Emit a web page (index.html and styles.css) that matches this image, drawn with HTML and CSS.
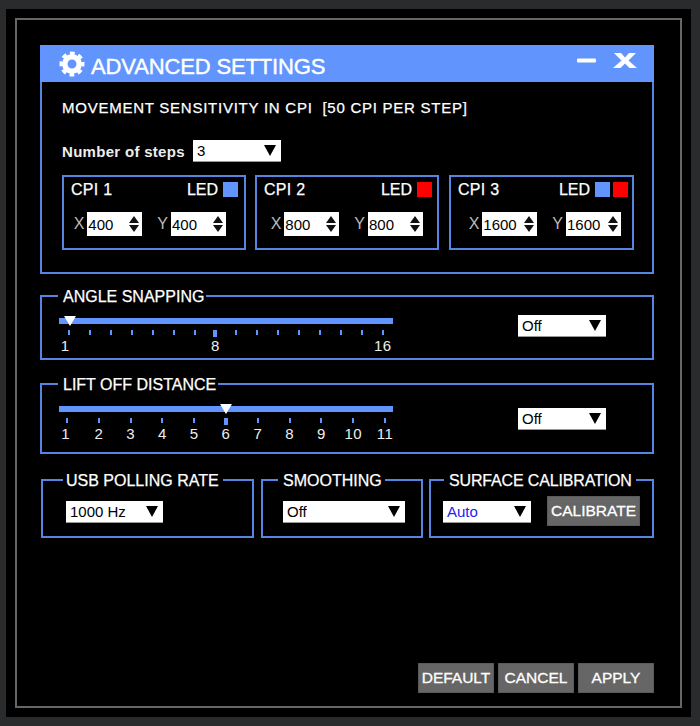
FILE: index.html
```html
<!DOCTYPE html>
<html lang="en">
<head>
<meta charset="utf-8">
<title>Advanced Settings</title>
<link rel="stylesheet" href="styles.css">
</head>
<body>
<div class="frame">
  <div class="inner">
    <header class="titlebar">
      <svg class="gear" viewBox="0 0 26 26" width="26" height="26" aria-hidden="true">
        <circle cx="13" cy="13" r="7.2" fill="none" stroke="#fff" stroke-width="5.4"/>
        <circle cx="13" cy="13" r="10.5" fill="none" stroke="#fff" stroke-width="4" stroke-dasharray="4.6 3.65" stroke-dashoffset="2.3"/>
      </svg>
      <h1 class="title">ADVANCED SETTINGS</h1>
      <svg class="winctl" viewBox="0 0 60 18" width="60" height="18" aria-hidden="true">
        <rect x="0" y="6.5" width="19" height="4" rx="1" fill="#fff"/>
        <path d="M37 1h7l4 4.5L52 1h7l-7.5 7.5L60 16h-7.500l-4.500-4.500L43.500 16H36l8.500-7.500z" fill="#fff"/>
      </svg>
    </header>

    <section class="panel">
      <div class="heading">MOVEMENT SENSITIVITY IN CPI&nbsp; [50 CPI PER STEP]</div>
      <div class="steps">
        <span class="steps-label">Number of steps</span>
        <div class="select w88"><span>3</span><i class="arrow"></i></div>
      </div>
      <div class="cards">
        <div class="card card-1">
          <div class="card-top"><span class="card-name">CPI 1</span><span class="led">LED</span><i class="swatch blue"></i></div>
          <div class="card-inputs">
            <span class="axis">X</span><div class="spin"><span>400</span><i class="updown"></i></div>
            <span class="axis axis-y">Y</span><div class="spin"><span>400</span><i class="updown"></i></div>
          </div>
        </div>
        <div class="card card-2">
          <div class="card-top"><span class="card-name">CPI 2</span><span class="led">LED</span><i class="swatch red"></i></div>
          <div class="card-inputs">
            <span class="axis">X</span><div class="spin"><span>800</span><i class="updown"></i></div>
            <span class="axis axis-y">Y</span><div class="spin"><span>800</span><i class="updown"></i></div>
          </div>
        </div>
        <div class="card card-3">
          <div class="card-top"><span class="card-name">CPI 3</span><span class="led">LED</span><i class="swatch blue"></i><i class="swatch red tight"></i></div>
          <div class="card-inputs">
            <span class="axis">X</span><div class="spin"><span>1600</span><i class="updown"></i></div>
            <span class="axis axis-y">Y</span><div class="spin"><span>1600</span><i class="updown"></i></div>
          </div>
        </div>
      </div>
    </section>

    <fieldset class="group angle">
      <legend>ANGLE SNAPPING</legend>
      <div class="slider slider-angle">
        <div class="track"></div>
        <i class="thumb thumb-angle"></i>
        <div class="stops">
          <div class="stop"><i class="tick"></i><span>1</span></div>
          <div class="stop"><i class="tick"></i></div>
          <div class="stop"><i class="tick"></i></div>
          <div class="stop"><i class="tick"></i></div>
          <div class="stop"><i class="tick"></i></div>
          <div class="stop"><i class="tick"></i></div>
          <div class="stop"><i class="tick"></i></div>
          <div class="stop"><i class="tick major"></i><span>8</span></div>
          <div class="stop"><i class="tick"></i></div>
          <div class="stop"><i class="tick"></i></div>
          <div class="stop"><i class="tick"></i></div>
          <div class="stop"><i class="tick"></i></div>
          <div class="stop"><i class="tick"></i></div>
          <div class="stop"><i class="tick"></i></div>
          <div class="stop"><i class="tick"></i></div>
          <div class="stop"><i class="tick"></i><span>16</span></div>
        </div>
      </div>
      <div class="select w88 side"><span>Off</span><i class="arrow"></i></div>
    </fieldset>

    <fieldset class="group lift">
      <legend>LIFT OFF DISTANCE</legend>
      <div class="slider slider-lift">
        <div class="track"></div>
        <i class="thumb thumb-lift"></i>
        <div class="stops">
          <div class="stop"><i class="tick"></i><span>1</span></div>
          <div class="stop"><i class="tick"></i><span>2</span></div>
          <div class="stop"><i class="tick"></i><span>3</span></div>
          <div class="stop"><i class="tick"></i><span>4</span></div>
          <div class="stop"><i class="tick"></i><span>5</span></div>
          <div class="stop"><i class="tick major"></i><span>6</span></div>
          <div class="stop"><i class="tick"></i><span>7</span></div>
          <div class="stop"><i class="tick"></i><span>8</span></div>
          <div class="stop"><i class="tick"></i><span>9</span></div>
          <div class="stop"><i class="tick"></i><span>10</span></div>
          <div class="stop"><i class="tick"></i><span>11</span></div>
        </div>
      </div>
      <div class="select w88 side"><span>Off</span><i class="arrow"></i></div>
    </fieldset>

    <div class="trio">
      <fieldset class="group mini usb">
        <legend>USB POLLING RATE</legend>
        <div class="select w97"><span>1000 Hz</span><i class="arrow"></i></div>
      </fieldset>
      <fieldset class="group mini smooth">
        <legend>SMOOTHING</legend>
        <div class="select grow"><span>Off</span><i class="arrow"></i></div>
      </fieldset>
      <fieldset class="group mini surface">
        <legend>SURFACE CALIBRATION</legend>
        <div class="select w88 auto"><span>Auto</span><i class="arrow"></i></div>
        <button class="btn calibrate" type="button">CALIBRATE</button>
      </fieldset>
    </div>

    <footer class="actions">
      <button class="btn action" type="button">DEFAULT</button>
      <button class="btn action" type="button">CANCEL</button>
      <button class="btn action" type="button">APPLY</button>
    </footer>
  </div>
</div>
</body>
</html>
```
FILE: styles.css
```css
* { box-sizing: border-box; }
html, body { margin: 0; height: 726px; }
body {
  background: #2a2b2d;
  padding: 9px 9px 9px 6px;
  overflow: hidden;
  font-family: "Liberation Sans", Arial, sans-serif;
  color: #fff;
}
.frame { background: #000; height: 708px; padding: 9px 9px 9px 9px; }
.inner {
  height: 690px;
  border: 2px solid #666;
  padding: 25px 26px 0 23px;
  display: flex;
  flex-direction: column;
}
.titlebar {
  height: 37px;
  background: #6195fd;
  display: flex;
  align-items: center;
  padding: 0 17px 0 19px;
}
.gear { flex: none; margin-right: 6px; }
.title {
  margin: 0;
  flex: 1;
  font-size: 22px;
  font-weight: 400;
  letter-spacing: -0.15px;
  -webkit-text-stroke: 0.4px #fff;
  padding-top: 7px;
}
.winctl { flex: none; margin-top: -6px; }

.panel {
  border: 2px solid #5585e0;
  border-top: 0;
  height: 192px;
  padding: 16px 18px 0 20px;
}
.heading {
  font-size: 15px;
  line-height: 20px;
  letter-spacing: 0.75px;
  -webkit-text-stroke: 0.25px #fff;
}
.steps {
  display: flex;
  align-items: center;
  margin-top: 22px;
  height: 22px;
}
.steps-label {
  font-size: 15px;
  font-weight: 700;
  width: 131px;
  color: #eee;
  letter-spacing: 0.3px;
}
.select {
  background: #fff;
  color: #000;
  height: 22px;
  display: flex;
  align-items: center;
  justify-content: space-between;
  padding: 0 5px 0 4px;
  font-size: 15px;
  border-bottom: 1px solid #999;
  flex: none;
}
.w88 { width: 88px; }
.w97 { width: 97px; }
.grow { width: 122px; }
.auto { color: #2222ee; }
.arrow {
  width: 0;
  height: 0;
  border-left: 6.5px solid transparent;
  border-right: 6.5px solid transparent;
  border-top: 11px solid #000;
}
.cards { display: flex; gap: 9px; margin-top: 13px; }
.card {
  flex: none;
  width: 184px;
  height: 75px;
  border: 2px solid #5585e0;
  padding: 4px 6px 0 7px;
}
.card-2 { padding-right: 5px; }
.card-3 { width: 185px; margin-left: 1px; padding-right: 4px; }
.card-top { display: flex; align-items: center; height: 17px; }
.card-name {
  flex: 1;
  font-size: 16px;
  letter-spacing: 0.3px;
  -webkit-text-stroke: 0.25px #fff;
}
.led { font-size: 16px; -webkit-text-stroke: 0.25px #fff; }
.swatch { width: 15px; height: 15px; margin-left: 5px; }
.tight { margin-left: 3px; }
.blue { background: #6195fd; }
.red { background: #f00; }
.card-inputs {
  display: flex;
  justify-content: flex-end;
  align-items: center;
  margin-top: 14px;
}
.card-1 .card-inputs { padding-right: 12px; }
.card-2 .card-inputs { padding-right: 9px; }
.card-3 .card-inputs { padding-right: 7px; }
.axis { font-size: 16px; color: #bbb; margin-right: 3px; }
.axis-y { margin-left: 15px; }
.spin {
  width: 55px;
  height: 24px;
  background: #fff;
  color: #000;
  font-size: 15px;
  display: flex;
  align-items: center;
  justify-content: space-between;
  padding: 0 3px 0 1px;
}
.updown {
  flex: none;
  display: flex;
  flex-direction: column;
  gap: 2px;
}
.updown::before,
.updown::after {
  content: "";
  width: 0;
  height: 0;
  border-left: 5px solid transparent;
  border-right: 5px solid transparent;
}
.updown::before { border-bottom: 7px solid #111; }
.updown::after { border-top: 7px solid #111; }

.group {
  margin: 0;
  min-width: 0;
  border: 2px solid #5585e0;
  color: #fff;
  padding: 0;
}
.group legend {
  font-size: 16px;
  line-height: 18px;
  padding: 2px 2px 0 5px;
  letter-spacing: 0;
  white-space: nowrap;
  -webkit-text-stroke: 0.25px #fff;
  margin-left: 16px;
}
.angle, .lift {
  position: relative;
  display: flex;
  align-items: flex-start;
  justify-content: space-between;
}
.angle { margin-top: 12px; height: 74px; }
.lift { margin-top: 14px; height: 80px; }
.slider { position: relative; margin-left: 17px; }
.slider-angle { width: 334px; margin-top: 12px; }
.slider-lift { width: 338px; margin-left: 15px; margin-top: 12px; }
.slider-lift .track { margin-left: 2px; width: 334px; }
.track { height: 6px; background: #6195fd; }
.thumb {
  position: absolute;
  top: -2px;
  width: 0;
  height: 0;
  border-left: 6px solid transparent;
  border-right: 6px solid transparent;
  border-top: 10px solid #fff;
}
.thumb-angle { left: 5px; }
.thumb-lift { left: 163px; }
.stops { display: flex; justify-content: space-between; margin-top: 6px; }
.stop {
  width: 20px;
  display: flex;
  flex-direction: column;
  align-items: center;
  font-size: 15px;
  letter-spacing: 0.4px;
  color: #eee;
}
.stop span { margin-top: 3px; line-height: 16px; white-space: nowrap; }
.slider-angle .stop:first-child span { margin-right: 8px; }
.slider-lift .stop:first-child span { margin-right: 3px; }
.tick { width: 2px; height: 5px; background: #6195fd; }
.tick.major { width: 4px; height: 7px; margin-bottom: -2px; }
.side { margin-right: 46px; }
.angle .side { margin-top: 9px; }
.lift .side { margin-top: 14px; }

.trio { display: flex; gap: 6px; margin-top: 16px; padding-left: 1px; }
.mini {
  height: 68px;
  display: flex;
  align-items: flex-start;
}
.usb { width: 213px; }
.smooth { width: 162px; margin-left: 1px; }
.surface { flex: 1; gap: 16px; }
.mini .select { margin-top: 11px; }
.usb .select { margin-left: 23px; }
.smooth .select { margin-left: 20px; }
.surface .select { margin-left: 12px; }
.usb legend { margin-left: 20px; padding: 2px 4px 0 3px; }
.smooth legend { margin-left: 15px; padding: 2px 3px 0 5px; }
.surface legend { margin-left: 13px; padding: 2px 4px 0 5px; letter-spacing: -0.15px; }

.btn {
  background: #666;
  color: #fff;
  border: 1px solid #5a5a5a;
  font-family: inherit;
  font-size: 15.5px;
  padding: 0;
  height: 30px;
  -webkit-text-stroke: 0.3px #fff;
}
.calibrate { width: 93px; margin-top: 6px; }
.actions {
  margin-top: auto;
  margin-bottom: 13px;
  display: flex;
  justify-content: flex-end;
  gap: 4px;
}
.action { width: 76px; }
```
